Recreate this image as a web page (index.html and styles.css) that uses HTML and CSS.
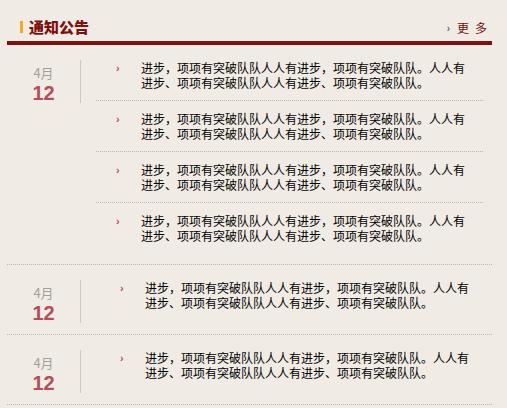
FILE: index.html
```html
<!DOCTYPE html>
<html lang="zh-CN">
<head>
<meta charset="utf-8">
<title>通知公告</title>
<link rel="stylesheet" href="styles.css">
</head>
<body>
<div class="panel">
  <div class="header">
    <h2 class="title"><span class="bar"></span>通知公告</h2>
    <a class="more" href="#"><span class="more-arrow">›</span><span>更</span><span>多</span></a>
  </div>

  <div class="group">
    <div class="date"><div class="month">4月</div><div class="day">12</div></div>
    <ul class="list">
      <li class="item">进步，项项有突破队队人人有进步，项项有突破队队。人人有进步、项项有突破队队人人有进步、项项有突破队队。</li>
      <li class="item">进步，项项有突破队队人人有进步，项项有突破队队。人人有进步、项项有突破队队人人有进步、项项有突破队队。</li>
      <li class="item">进步，项项有突破队队人人有进步，项项有突破队队。人人有进步、项项有突破队队人人有进步、项项有突破队队。</li>
      <li class="item">进步，项项有突破队队人人有进步，项项有突破队队。人人有进步、项项有突破队队人人有进步、项项有突破队队。</li>
    </ul>
  </div>

  <div class="group">
    <div class="date"><div class="month">4月</div><div class="day">12</div></div>
    <ul class="list single">
      <li class="item">进步，项项有突破队队人人有进步，项项有突破队队。人人有进步、项项有突破队队人人有进步、项项有突破队队。</li>
    </ul>
  </div>

  <div class="group">
    <div class="date"><div class="month">4月</div><div class="day">12</div></div>
    <ul class="list single">
      <li class="item">进步，项项有突破队队人人有进步，项项有突破队队。人人有进步、项项有突破队队人人有进步、项项有突破队队。</li>
    </ul>
  </div>
</div>
</body>
</html>
```

FILE: styles.css
```css
html, body {
  margin: 0;
  padding: 0;
}

body {
  background: #f0ece5;
  font-family: "Noto Sans CJK SC", "Liberation Sans", sans-serif;
  font-size: 12px;
  color: #000;
}

.panel {
  margin-left: 7px;
  width: 485px;
}

.header {
  display: flex;
  justify-content: space-between;
  align-items: flex-start;
  height: 23px;
  padding-top: 18px;
  border-bottom: 4px solid #7b1212;
}

.title {
  display: flex;
  align-items: center;
  margin: 0 0 0 13px;
  font-size: 15px;
  line-height: 17px;
  font-weight: 900;
  color: #7d1010;
}

.bar {
  width: 3px;
  height: 12px;
  background: #efaa2a;
  margin-right: 6px;
}

.more {
  display: flex;
  align-items: center;
  gap: 6px;
  margin-top: 1px;
  padding-right: 5px;
  color: #6e1212;
  text-decoration: none;
  font-size: 12px;
  line-height: 15px;
}

.more-arrow {
  font-family: "Liberation Sans", sans-serif;
  font-size: 10px;
  font-weight: bold;
  color: #7a6a60;
  margin-right: 1px;
  padding-top: 2px;
}

.group {
  display: flex;
  align-items: flex-start;
  padding: 5px 0 11px;
  border-bottom: 1px dotted #b9b6b0;
}

.date {
  width: 73px;
  height: 39px;
  margin-top: 10px;
  padding-top: 4px;
  border-right: 1px solid #cdc9c1;
  text-align: center;
  font-family: "Liberation Sans", "Noto Sans CJK SC", sans-serif;
}

.month {
  font-family: "Noto Sans CJK SC", sans-serif;
  font-size: 13px;
  line-height: 18px;
  color: #a3a09b;
}

.day {
  font-size: 20px;
  line-height: 22px;
  font-weight: bold;
  color: #b24f5a;
}

.list {
  list-style: none;
  margin: 0 0 0 15px;
  padding: 0;
  width: 387px;
}

.list.single {
  margin-left: 19px;
  width: 383px;
}

.item {
  position: relative;
  padding: 10px 12px 10px 45px;
  line-height: 15px;
  border-bottom: 1px dotted #b9b6b0;
}

.item:last-child {
  border-bottom: none;
}

.item::before {
  content: "›";
  position: absolute;
  left: 20px;
  top: 11px;
  font-family: "Liberation Sans", sans-serif;
  font-size: 11px;
  font-weight: bold;
  line-height: 15px;
  color: #c8475c;
}
```
